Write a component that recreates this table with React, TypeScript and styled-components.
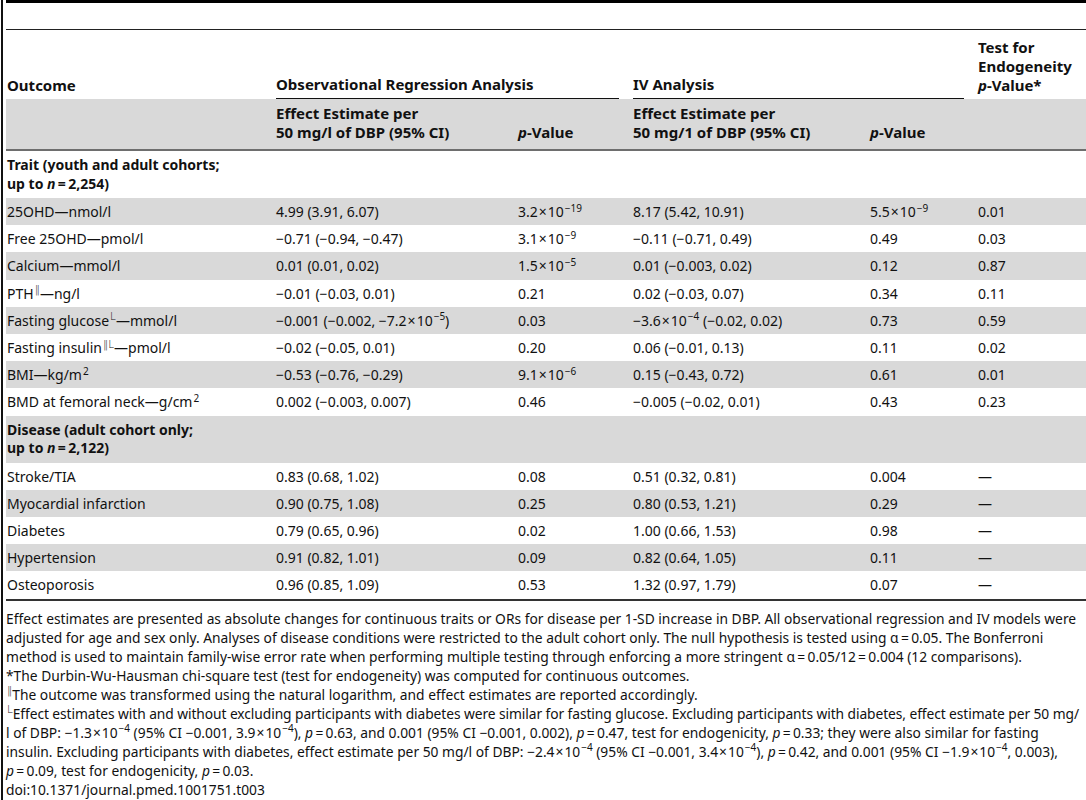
import React from "react";
import styled, { createGlobalStyle } from "styled-components";

const GlobalStyle = createGlobalStyle`
  html, body { margin: 0; padding: 0; background: #fff; }
  body {
    font-family: "Noto Sans", "Open Sans", "DejaVu Sans", sans-serif;
    color: #111;
    font-size: 14px;
  }
`;

const Page = styled.div`
  margin-left: 1px;
  border-left: 2px solid #111;
  min-height: 800px;
  padding-left: 3px;
  overflow: hidden;
  box-sizing: border-box;
`;

const Caption = styled.div`
  height: 26px;
  border-top: 3px solid #000;
  border-bottom: 1px solid #222;
`;

const Table = styled.table`
  width: 1080px;
  table-layout: fixed;
  border-collapse: collapse;
  font-size: 14px;
`;

const HeadRow = styled.tr<{ $shade?: boolean }>`
  background: ${(p) => (p.$shade ? "#d9d9d9" : "#fff")};
  border-bottom: ${(p) => (p.$shade ? "2px solid #6e6e6e" : "none")};
`;

const Th = styled.th<{ $first?: boolean; $pt?: number; $pb?: number; $lh?: number }>`
  text-align: left;
  vertical-align: bottom;
  font-weight: 700;
  font-size: 15px;
  line-height: ${(p) => p.$lh ?? 19}px;
  padding: ${(p) => p.$pt ?? 0}px 7px ${(p) => p.$pb ?? 4}px
    ${(p) => (p.$first ? 1 : 7)}px;
  white-space: nowrap;
`;

const GroupTh = styled.th`
  text-align: left;
  vertical-align: bottom;
  font-weight: 700;
  font-size: 15px;
  line-height: 19px;
  padding: 0 7px;
`;

const GroupRule = styled.div`
  padding-bottom: 4px;
  border-bottom: 1px solid #111;
`;

const Row = styled.tr<{ $shade: boolean }>`
  background: ${(p) => (p.$shade ? "#d9d9d9" : "#fff")};
`;

const Td = styled.td<{ $first?: boolean }>`
  vertical-align: middle;
  line-height: 19.2px;
  padding: 4px 7px 4px ${(p) => (p.$first ? 1 : 7)}px;
  white-space: nowrap;
`;

const SectionTd = styled.td`
  vertical-align: middle;
  line-height: 18.5px;
  padding: 5px 7px 5px 1px;
  font-weight: 700;
  white-space: nowrap;
`;

const Body = styled.tbody`
  border-bottom: 2px solid #333;
`;

const Sup = styled.sup`
  font-size: 10px;
  line-height: 0;
  vertical-align: 0.55em;
  margin-left: 1px;
`;

const Mark = styled.span`
  font-family: "DejaVu Sans", sans-serif;
  font-size: 10.5px;
  font-weight: 200;
`;

const Times = styled.span`
  margin: 0 1px;
`;

const Notes = styled.div`
  padding-top: 8px;
  font-size: 13.8px;
  line-height: 19px;
`;

const NoteLine = styled.div<{ $tight?: boolean }>`
  white-space: nowrap;
  letter-spacing: ${(p) => (p.$tight ? "-0.08px" : "0")};
`;

const Sci = ({ m, e }: { m: string; e: string }) => (
  <>
    {m}
    <Times>×</Times>10<Sup>{e}</Sup>
  </>
);

const Bar = () => (
  <Sup>
    <Mark>‖</Mark>
  </Sup>
);
const Ell = () => (
  <Sup>
    <Mark>L</Mark>
  </Sup>
);

type DataRow = {
  kind: "data";
  cells: React.ReactNode[];
};
type SectionRow = {
  kind: "section";
  lines: React.ReactNode[];
};

const rows: (DataRow | SectionRow)[] = [
  {
    kind: "section",
    lines: [
      "Trait (youth and adult cohorts;",
      <>
        up to <i>n</i>{"\u2009=\u2009"}2,254)
      </>,
    ],
  },
  {
    kind: "data",
    cells: [
      "25OHD—nmol/l",
      "4.99 (3.91, 6.07)",
      <Sci m="3.2" e="−19" />,
      "8.17 (5.42, 10.91)",
      <Sci m="5.5" e="−9" />,
      "0.01",
    ],
  },
  {
    kind: "data",
    cells: [
      "Free 25OHD—pmol/l",
      "−0.71 (−0.94, −0.47)",
      <Sci m="3.1" e="−9" />,
      "−0.11 (−0.71, 0.49)",
      "0.49",
      "0.03",
    ],
  },
  {
    kind: "data",
    cells: [
      "Calcium—mmol/l",
      "0.01 (0.01, 0.02)",
      <Sci m="1.5" e="−5" />,
      "0.01 (−0.003, 0.02)",
      "0.12",
      "0.87",
    ],
  },
  {
    kind: "data",
    cells: [
      <>
        PTH
        <Bar />
        —ng/l
      </>,
      "−0.01 (−0.03, 0.01)",
      "0.21",
      "0.02 (−0.03, 0.07)",
      "0.34",
      "0.11",
    ],
  },
  {
    kind: "data",
    cells: [
      <>
        Fasting glucose
        <Ell />
        —mmol/l
      </>,
      <>
        −0.001 (−0.002, −<Sci m="7.2" e="−5" />)
      </>,
      "0.03",
      <>
        −<Sci m="3.6" e="−4" /> (−0.02, 0.02)
      </>,
      "0.73",
      "0.59",
    ],
  },
  {
    kind: "data",
    cells: [
      <>
        Fasting insulin
        <Sup>
          <Mark>‖L</Mark>
        </Sup>
        —pmol/l
      </>,
      "−0.02 (−0.05, 0.01)",
      "0.20",
      "0.06 (−0.01, 0.13)",
      "0.11",
      "0.02",
    ],
  },
  {
    kind: "data",
    cells: [
      <>
        BMI—kg/m<Sup>2</Sup>
      </>,
      "−0.53 (−0.76, −0.29)",
      <Sci m="9.1" e="−6" />,
      "0.15 (−0.43, 0.72)",
      "0.61",
      "0.01",
    ],
  },
  {
    kind: "data",
    cells: [
      <>
        BMD at femoral neck—g/cm<Sup>2</Sup>
      </>,
      "0.002 (−0.003, 0.007)",
      "0.46",
      "−0.005 (−0.02, 0.01)",
      "0.43",
      "0.23",
    ],
  },
  {
    kind: "section",
    lines: [
      "Disease (adult cohort only;",
      <>
        up to <i>n</i>{"\u2009=\u2009"}2,122)
      </>,
    ],
  },
  {
    kind: "data",
    cells: ["Stroke/TIA", "0.83 (0.68, 1.02)", "0.08", "0.51 (0.32, 0.81)", "0.004", "—"],
  },
  {
    kind: "data",
    cells: ["Myocardial infarction", "0.90 (0.75, 1.08)", "0.25", "0.80 (0.53, 1.21)", "0.29", "—"],
  },
  {
    kind: "data",
    cells: ["Diabetes", "0.79 (0.65, 0.96)", "0.02", "1.00 (0.66, 1.53)", "0.98", "—"],
  },
  {
    kind: "data",
    cells: ["Hypertension", "0.91 (0.82, 1.01)", "0.09", "0.82 (0.64, 1.05)", "0.11", "—"],
  },
  {
    kind: "data",
    cells: ["Osteoporosis", "0.96 (0.85, 1.09)", "0.53", "1.32 (0.97, 1.79)", "0.07", "—"],
  },
];

const widths = [263, 242, 115, 237, 108, 115];

const P = () => <i>p</i>;
const Eq = "\u2009=\u2009";

export default function App() {
  return (
    <>
      <GlobalStyle />
      <Page>
        <Caption />
        <Table>
          <colgroup>
            {widths.map((w, i) => (
              <col key={i} style={{ width: w }} />
            ))}
          </colgroup>
          <thead>
            <HeadRow>
              <Th $first>Outcome</Th>
              <GroupTh colSpan={2}>
                <GroupRule>Observational Regression Analysis</GroupRule>
              </GroupTh>
              <GroupTh colSpan={2}>
                <GroupRule>IV Analysis</GroupRule>
              </GroupTh>
              <Th $pt={8}>
                Test for
                <br />
                Endogeneity
                <br />
                <i>p</i>-Value*
              </Th>
            </HeadRow>
            <HeadRow $shade>
              <Th $first $pt={5} $pb={8} $lh={18.5} />
              <Th $pt={5} $pb={8} $lh={18.5}>
                Effect Estimate per
                <br />
                50 mg/l of DBP (95% CI)
              </Th>
              <Th $pt={5} $pb={8} $lh={18.5}>
                <i>p</i>-Value
              </Th>
              <Th $pt={5} $pb={8} $lh={18.5}>
                Effect Estimate per
                <br />
                50 mg/1 of DBP (95% CI)
              </Th>
              <Th $pt={5} $pb={8} $lh={18.5}>
                <i>p</i>-Value
              </Th>
              <Th $pt={5} $pb={8} $lh={18.5} />
            </HeadRow>
          </thead>
          <Body>
            {rows.map((r, i) =>
              r.kind === "section" ? (
                <Row key={i} $shade={i % 2 === 1}>
                  <SectionTd>
                    {r.lines.map((l, j) => (
                      <div key={j}>{l}</div>
                    ))}
                  </SectionTd>
                  <Td />
                  <Td />
                  <Td />
                  <Td />
                  <Td />
                </Row>
              ) : (
                <Row key={i} $shade={i % 2 === 1}>
                  {r.cells.map((c, j) => (
                    <Td key={j} $first={j === 0}>
                      {c}
                    </Td>
                  ))}
                </Row>
              )
            )}
          </Body>
        </Table>
        <Notes>
          <NoteLine>
            Effect estimates are presented as absolute changes for continuous traits or ORs for
            disease per 1-SD increase in DBP. All observational regression and IV models were
          </NoteLine>
          <NoteLine>
            adjusted for age and sex only. Analyses of disease conditions were restricted to the
            adult cohort only. The null hypothesis is tested using α{Eq}0.05. The Bonferroni
          </NoteLine>
          <NoteLine>
            method is used to maintain family-wise error rate when performing multiple testing
            through enforcing a more stringent α{Eq}0.05/12{Eq}0.004 (12 comparisons).
          </NoteLine>
          <NoteLine>
            *The Durbin-Wu-Hausman chi-square test (test for endogeneity) was computed for
            continuous outcomes.
          </NoteLine>
          <NoteLine>
            <Bar />
            The outcome was transformed using the natural logarithm, and effect estimates are
            reported accordingly.
          </NoteLine>
          <NoteLine $tight>
            <Ell />
            Effect estimates with and without excluding participants with diabetes were similar
            for fasting glucose. Excluding participants with diabetes, effect estimate per 50 mg/
          </NoteLine>
          <NoteLine>
            l of DBP: −<Sci m="1.3" e="−4" /> (95% CI −0.001, <Sci m="3.9" e="−4" />), <P />
            {Eq}0.63, and 0.001 (95% CI −0.001, 0.002), <P />
            {Eq}0.47, test for endogenicity, <P />
            {Eq}0.33; they were also similar for fasting
          </NoteLine>
          <NoteLine>
            insulin. Excluding participants with diabetes, effect estimate per 50 mg/l of DBP: −
            <Sci m="2.4" e="−4" /> (95% CI −0.001, <Sci m="3.4" e="−4" />), <P />
            {Eq}0.42, and 0.001 (95% CI −<Sci m="1.9" e="−4" />, 0.003),
          </NoteLine>
          <NoteLine>
            <P />
            {Eq}0.09, test for endogenicity, <P />
            {Eq}0.03.
          </NoteLine>
          <NoteLine>doi:10.1371/journal.pmed.1001751.t003</NoteLine>
        </Notes>
      </Page>
    </>
  );
}
